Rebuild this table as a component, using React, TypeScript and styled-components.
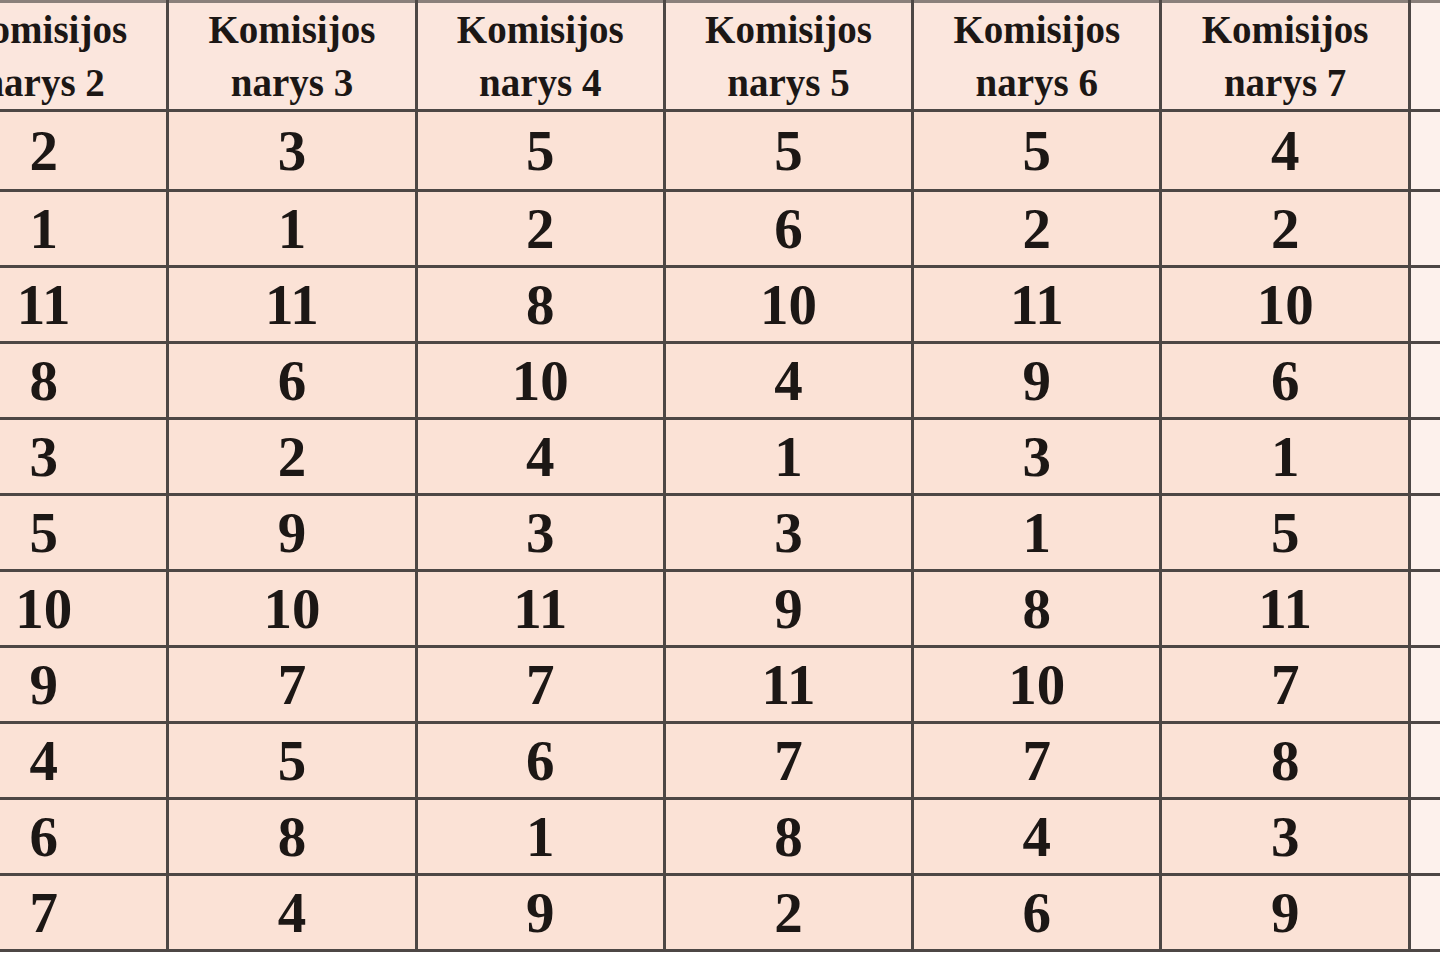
import React from "react";
import styled, { createGlobalStyle } from "styled-components";

const GlobalStyle = createGlobalStyle`
  html, body {
    margin: 0;
    padding: 0;
    background: #ffffff;
    overflow: hidden;
  }
`;

const Viewport = styled.div`
  width: 1440px;
  height: 960px;
  overflow: hidden;
`;

const COL = 248.3;

const Grid = styled.table`
  margin-left: -82px;
  border-collapse: collapse;
  table-layout: fixed;
  width: ${COL * 7}px;
  font-family: "Liberation Serif", "Times New Roman", serif;
  font-weight: bold;
  color: #1c1715;
  border-top: 3px solid #8a807b;
`;

const Column = styled.col`
  width: ${COL}px;
`;

const HeadCell = styled.th<{ $faded?: boolean }>`
  height: 106px;
  padding: 0;
  background: ${({ $faded }) => ($faded ? "#fdf1ec" : "#fbe6dd")};
  border-left: 3px solid #4d4745;
  border-right: 3px solid #4d4745;
  border-bottom: 3px solid #4d4745;
  font-size: 39px;
  line-height: 53px;
  font-weight: bold;
  text-align: center;
  vertical-align: middle;
`;

const Cell = styled.td<{ $tall?: boolean; $faded?: boolean }>`
  height: ${({ $tall }) => ($tall ? "77px" : "73px")};
  padding: 0;
  background: ${({ $faded }) => ($faded ? "#fdf1ec" : "#fbe2d6")};
  border: 3px solid #4d4745;
  font-size: 57px;
  line-height: 1;
  text-align: center;
  vertical-align: middle;
`;

const members = [2, 3, 4, 5, 6, 7];

const scores: number[][] = [
  [2, 1, 11, 8, 3, 5, 10, 9, 4, 6, 7],
  [3, 1, 11, 6, 2, 9, 10, 7, 5, 8, 4],
  [5, 2, 8, 10, 4, 3, 11, 7, 6, 1, 9],
  [5, 6, 10, 4, 1, 3, 9, 11, 7, 8, 2],
  [5, 2, 11, 9, 3, 1, 8, 10, 7, 4, 6],
  [4, 2, 10, 6, 1, 5, 11, 7, 8, 3, 9],
];

export default function App() {
  const rows = scores[0].map((_, r) => scores.map((col) => col[r]));

  return (
    <Viewport>
      <GlobalStyle />
      <Grid>
        <colgroup>
          {members.map((m) => (
            <Column key={m} />
          ))}
          <Column />
        </colgroup>
        <thead>
          <tr>
            {members.map((m) => (
              <HeadCell key={m}>
                Komisijos
                <br />
                narys {m}
              </HeadCell>
            ))}
            <HeadCell $faded />
          </tr>
        </thead>
        <tbody>
          {rows.map((row, i) => (
            <tr key={i}>
              {row.map((v, j) => (
                <Cell key={j} $tall={i === 0}>
                  {v}
                </Cell>
              ))}
              <Cell $faded $tall={i === 0} />
            </tr>
          ))}
        </tbody>
      </Grid>
    </Viewport>
  );
}
